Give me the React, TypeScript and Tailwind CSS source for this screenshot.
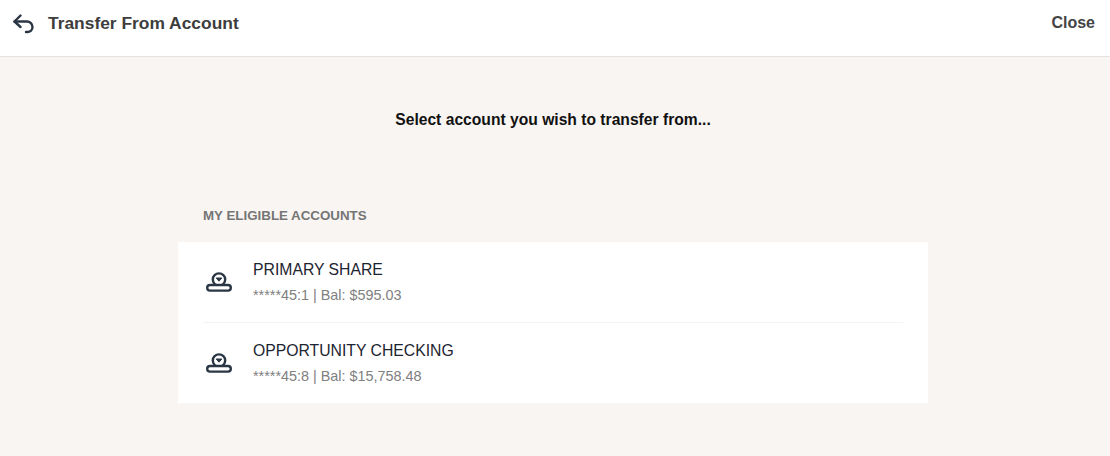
const accounts = [
  { name: 'PRIMARY SHARE', detail: '*****45:1 | Bal: $595.03' },
  { name: 'OPPORTUNITY CHECKING', detail: '*****45:8 | Bal: $15,758.48' },
]

function AccountIcon() {
  return (
    <svg width="26" height="20" viewBox="0 0 26 20" fill="none" stroke="#2b3644" strokeWidth="2.4">
      <circle cx="13" cy="7.6" r="6.2" />
      <rect x="1.2" y="13" width="23.6" height="5.6" rx="2.8" fill="#ffffff" />
      <path d="M10.2 6h5.6L13 9.2z" fill="#2b3644" stroke="#2b3644" strokeWidth="1" strokeLinejoin="round" />
    </svg>
  )
}

function BackIcon() {
  return (
    <svg width="22" height="20" viewBox="0 0 22 20" fill="none" stroke="#2b3644" strokeWidth="2.4" strokeLinecap="round" strokeLinejoin="round" className="mt-[2px]">
      <path d="M7.5 1.5 1.5 7.5l6 5.5" />
      <path d="M1.5 7.5h12.5a5.5 5.5 0 0 1 5.5 5.5 5 5 0 0 1-5 5h-1.5" />
    </svg>
  )
}

export default function App() {
  return (
    <div className="w-[1110px] h-[456px] overflow-hidden bg-[#f9f5f2] font-['Liberation_Sans',Arial,sans-serif]">
      <header className="h-[57px] bg-white border-b border-[#e4e4e4] flex items-center justify-between pb-[10px] pl-[13px] pr-[15px]">
        <div className="flex items-center gap-[13px]">
          <BackIcon />
          <h1 className="text-[17.4px] font-bold text-[#3d3d3d]">Transfer From Account</h1>
        </div>
        <button className="text-[16px] font-bold text-[#444444]">Close</button>
      </header>

      <p className="mt-[53px] pr-[4px] text-center text-[15.65px] leading-[20px] font-bold text-[#111111]">
        Select account you wish to transfer from...
      </p>

      <section className="w-[750px] ml-[178px] mt-[77px]">
        <h2 className="pl-[25px] text-[13.33px] leading-[18px] font-bold text-[#757575]">MY ELIGIBLE ACCOUNTS</h2>
        <div className="mt-[17px] bg-white px-[25px]">
          {accounts.map((account, index) => (
            <div
              key={account.name}
              className={`flex items-center gap-[21px] pl-[3px] ${index === 0 ? 'h-[81px] border-b border-[#f6f3f1]' : 'h-[80px]'}`}
            >
              <AccountIcon />
              <div>
                <div className="text-[15.75px] leading-[20px] text-[#1c2430]">{account.name}</div>
                <div className="mt-[5px] text-[14.4px] leading-[20px] text-[#808080]">{account.detail}</div>
              </div>
            </div>
          ))}
        </div>
      </section>
    </div>
  )
}
